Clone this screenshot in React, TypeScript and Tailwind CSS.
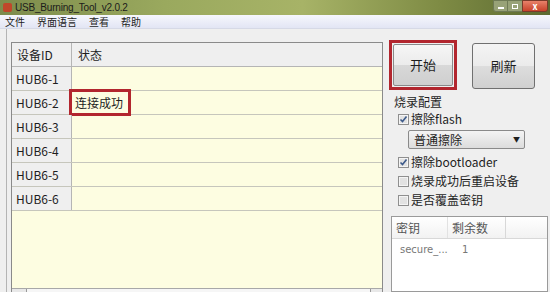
import React from 'react'

const cjk = { fontFamily: '"Noto Sans CJK SC", "Noto Sans", sans-serif' }

function Check({ on }: { on?: boolean }) {
  return (
    <svg width="11" height="11" viewBox="0 0 11 11" className="shrink-0">
      <rect x="0.5" y="0.5" width="10" height="10" fill="#f4f4f4" stroke="#8f8f8f" />
      <rect x="2" y="2" width="7" height="7" fill="#e2e2e2" />
      {on && <path d="M2.5 5.5 L4.5 7.5 L8.5 2.5" fill="none" stroke="#3d5a8a" strokeWidth="1.6" />}
    </svg>
  )
}

const rows = ['HUB6-1', 'HUB6-2', 'HUB6-3', 'HUB6-4', 'HUB6-5', 'HUB6-6']

export default function App() {
  return (
    <div className="w-[550px] h-[292px] overflow-hidden flex flex-col bg-[#efefef] text-[#1e1e1e]" style={cjk}>
      {/* title bar */}
      <div className="h-[15px] shrink-0 flex items-center bg-[linear-gradient(90deg,#7d8c4c_0%,#9aa95e_30%,#a7b367_55%,#7e8b44_80%,#5c6a31_100%)]">
        <div className="ml-[3px] w-[9px] h-[9px] rounded-[2px] bg-[#c0472a]" />
        <span className="ml-[3px] text-[10px] leading-[12px] text-[#1b1b1b] tracking-[-0.2px]" style={{ fontFamily: '"Liberation Sans", sans-serif' }}>
          USB_Burning_Tool_v2.0.2
        </span>
        <div className="flex-1" />
        <div className="flex h-[12px] self-start mr-[2px]">
          <div className="w-[15px] h-full rounded-bl-[3px] border border-[#6f7a55] bg-[#98a277] flex items-center justify-center">
            <div className="w-[6px] h-[2px] bg-white mt-[3px]" />
          </div>
          <div className="w-[14px] h-full border-y border-[#6f7a55] bg-[#98a277] flex items-center justify-center">
            <div className="w-[6px] h-[5px] border border-white" />
          </div>
          <div className="w-[26px] h-full rounded-br-[3px] border border-[#7a3a2a] bg-[linear-gradient(180deg,#e8826a,#c8422a)] flex items-center justify-center text-white text-[9px] leading-none font-bold">
            x
          </div>
        </div>
      </div>

      {/* menu bar */}
      <div className="h-[14px] shrink-0 flex items-center gap-[12px] pl-[5px] text-[10px] leading-[12px] bg-[linear-gradient(180deg,#f6f7fc,#e2e5f4)] border-b border-[#d6d9e6]">
        <span>文件</span>
        <span>界面语言</span>
        <span>查看</span>
        <span>帮助</span>
      </div>

      {/* body */}
      <div className="flex-1 flex min-h-0">
        <div className="w-[7px] shrink-0 border-r border-[#b4b4b4]" />
        <div className="w-[4px] shrink-0" />

        {/* grid */}
        <div className="w-[372px] shrink-0 mt-[13px] flex flex-col border-l border-t border-r border-[#8a8a8a] bg-[#fdfde1]">
          <div className="h-[24px] shrink-0 flex bg-[#efefef] border-b border-[#b5b5b5] text-[12px]">
            <div className="w-[60px] shrink-0 border-r border-[#b5b5b5] flex items-center pl-[5px]">设备ID</div>
            <div className="flex items-center pl-[6px]">状态</div>
          </div>
          {rows.map((r, i) => (
            <div key={r} className="h-[24px] shrink-0 flex border-b border-[#c6c6bc] text-[12px]">
              <div className="w-[60px] shrink-0 bg-[#efefef] border-r border-[#b5b5b5] flex items-center pl-[4px]">{r}</div>
              <div className="flex-1 flex items-center">
                {i === 1 && (
                  <div className="-ml-[3px] h-[27px] w-[62px] border-[3px] border-[#b2262e] flex items-center pl-[3px] bg-[#fdfde1]">
                    连接成功
                  </div>
                )}
              </div>
            </div>
          ))}
          <div className="flex-1" />
          <div className="h-[4px] shrink-0 border-t border-[#a8a8a8] bg-[#e8e8e8] flex">
            <div className="ml-[14px] w-[345px] h-full border-x border-[#9a9a9a] bg-[#f6f6f6]" />
          </div>
        </div>

        {/* right panel */}
        <div className="w-[160px] shrink-0 ml-[6px] flex flex-col">
          <div className="flex items-start mt-[11px]">
            <div className="w-[68px] h-[50px] border-[3px] border-[#b2262e] p-[1px]">
              <div className="w-full h-full rounded-[2px] border border-[#8a8a8a] bg-[linear-gradient(180deg,#f6f6f6_0%,#ebebeb_50%,#d8d8d8_51%,#cfcfcf_100%)] flex items-center justify-center text-[13px]">
                开始
              </div>
            </div>
            <div className="ml-[15px] mt-[3px] w-[63px] h-[46px] rounded-[3px] border border-[#707070] bg-[linear-gradient(180deg,#f4f4f4_0%,#ebebeb_50%,#dddddd_51%,#d0d0d0_100%)] flex items-center justify-center text-[13px]">
              刷新
            </div>
          </div>

          <div className="mt-[5px] ml-[5px] text-[12px] leading-[14px]">烧录配置</div>
          <div className="ml-[9px] mt-[3px] flex items-center gap-[2px] text-[12px] leading-[14px]">
            <Check on />
            <span>擦除flash</span>
          </div>
          <div className="ml-[19px] mt-[4px] w-[117px] h-[19px] rounded-[2px] border border-[#8a8a8a] bg-[linear-gradient(180deg,#f4f4f4,#dcdcdc)] flex items-center pl-[5px] pr-[4px] text-[12px]">
            <span className="flex-1">普通擦除</span>
            <span className="text-[7px] leading-none">▼</span>
          </div>
          <div className="ml-[9px] mt-[6px] flex items-center gap-[2px] text-[12px] leading-[14px]">
            <Check on />
            <span>擦除bootloader</span>
          </div>
          <div className="ml-[9px] mt-[5px] flex items-center gap-[2px] text-[12px] leading-[14px]">
            <Check />
            <span>烧录成功后重启设备</span>
          </div>
          <div className="ml-[9px] mt-[5px] flex items-center gap-[2px] text-[12px] leading-[14px]">
            <Check />
            <span>是否覆盖密钥</span>
          </div>

          <div className="mt-[9px] ml-[2px] w-[157px] flex-1 border border-[#9a9a9a] bg-white flex flex-col">
            <div className="h-[22px] shrink-0 flex border-b border-[#d8d8d8] bg-[linear-gradient(180deg,#ffffff,#f2f2f2)] text-[12px] text-[#555]">
              <div className="w-[56px] border-r border-[#e2e2e2] pl-[4px] flex items-center">密钥</div>
              <div className="w-[58px] border-r border-[#d8d8d8] pl-[4px] flex items-center">剩余数</div>
            </div>
            <div className="flex mt-[3px] text-[10px] text-[#777]" style={{ fontFamily: '"DejaVu Sans", sans-serif' }}>
              <span className="ml-[8px] w-[62px]">secure_...</span>
              <span>1</span>
            </div>
          </div>
        </div>
      </div>
    </div>
  )
}
